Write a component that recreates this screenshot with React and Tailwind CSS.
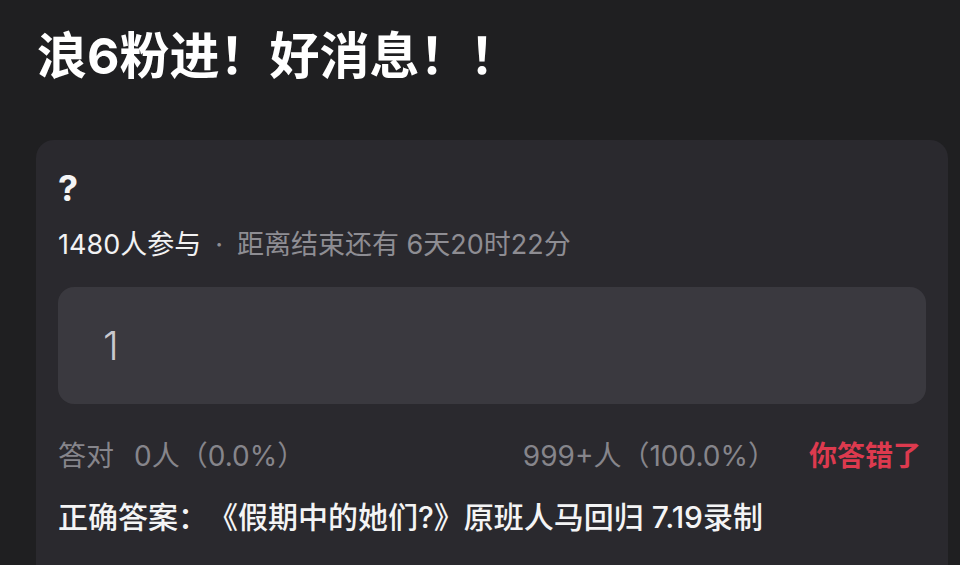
import React from "react";

const font = { fontFamily: 'Inter, "Noto Sans CJK SC", sans-serif' };

function QuizCard({ question, joined, remain, option, right, wrong, answer }) {
  return (
    <div className="mt-[59px] ml-[36px] mr-[12px] rounded-[18px] bg-[#2a292e] px-[22px] pt-[28px] pb-[60px]">
      <div className="text-[36px] leading-[40px] font-bold text-[#f4f4f5]">
        {question}
      </div>

      <div className="mt-[21px] text-[27px] leading-[32px] text-[#8e8d93] whitespace-nowrap">
        <span className="text-[#f2f2f3]">{joined}人参与</span>
        <span className="mx-[14px]">·</span>
        <span>距离结束还有 {remain}</span>
      </div>

      <div className="mt-[26px] h-[117px] flex items-center rounded-[16px] bg-[#3a393f] pl-[45px]">
        <span className="text-[40px] leading-none font-light text-[#c9c8ce]">{option}</span>
      </div>

      <div className="mt-[35px] pr-[5px] flex items-center text-[28px] leading-[34px] text-[#86858b] whitespace-nowrap">
        <span>答对</span>
        <span className="ml-[20px]">{right}</span>
        <span className="ml-auto">{wrong}</span>
        <span className="ml-[33px] font-bold text-[#dd3a4e]">你答错了</span>
      </div>

      <div className="mt-[27px] text-[30px] leading-[34px] font-medium text-[#f4f4f5] whitespace-nowrap">
        正确答案：{answer}
      </div>
    </div>
  );
}

export default function App() {
  return (
    <div
      className="w-[960px] h-[565px] overflow-hidden bg-[#1f1f21] [text-spacing-trim:space-all]"
      style={font}
    >
      <h1 className="pt-[31px] pl-[37px] text-[50px] leading-[50px] font-bold text-white">
        浪6粉进！好消息！！
      </h1>
      <QuizCard
        question="?"
        joined="1480"
        remain="6天20时22分"
        option="1"
        right="0人（0.0%）"
        wrong="999+人（100.0%）"
        answer="《假期中的她们?》原班人马回归 7.19录制"
      />
    </div>
  );
}
